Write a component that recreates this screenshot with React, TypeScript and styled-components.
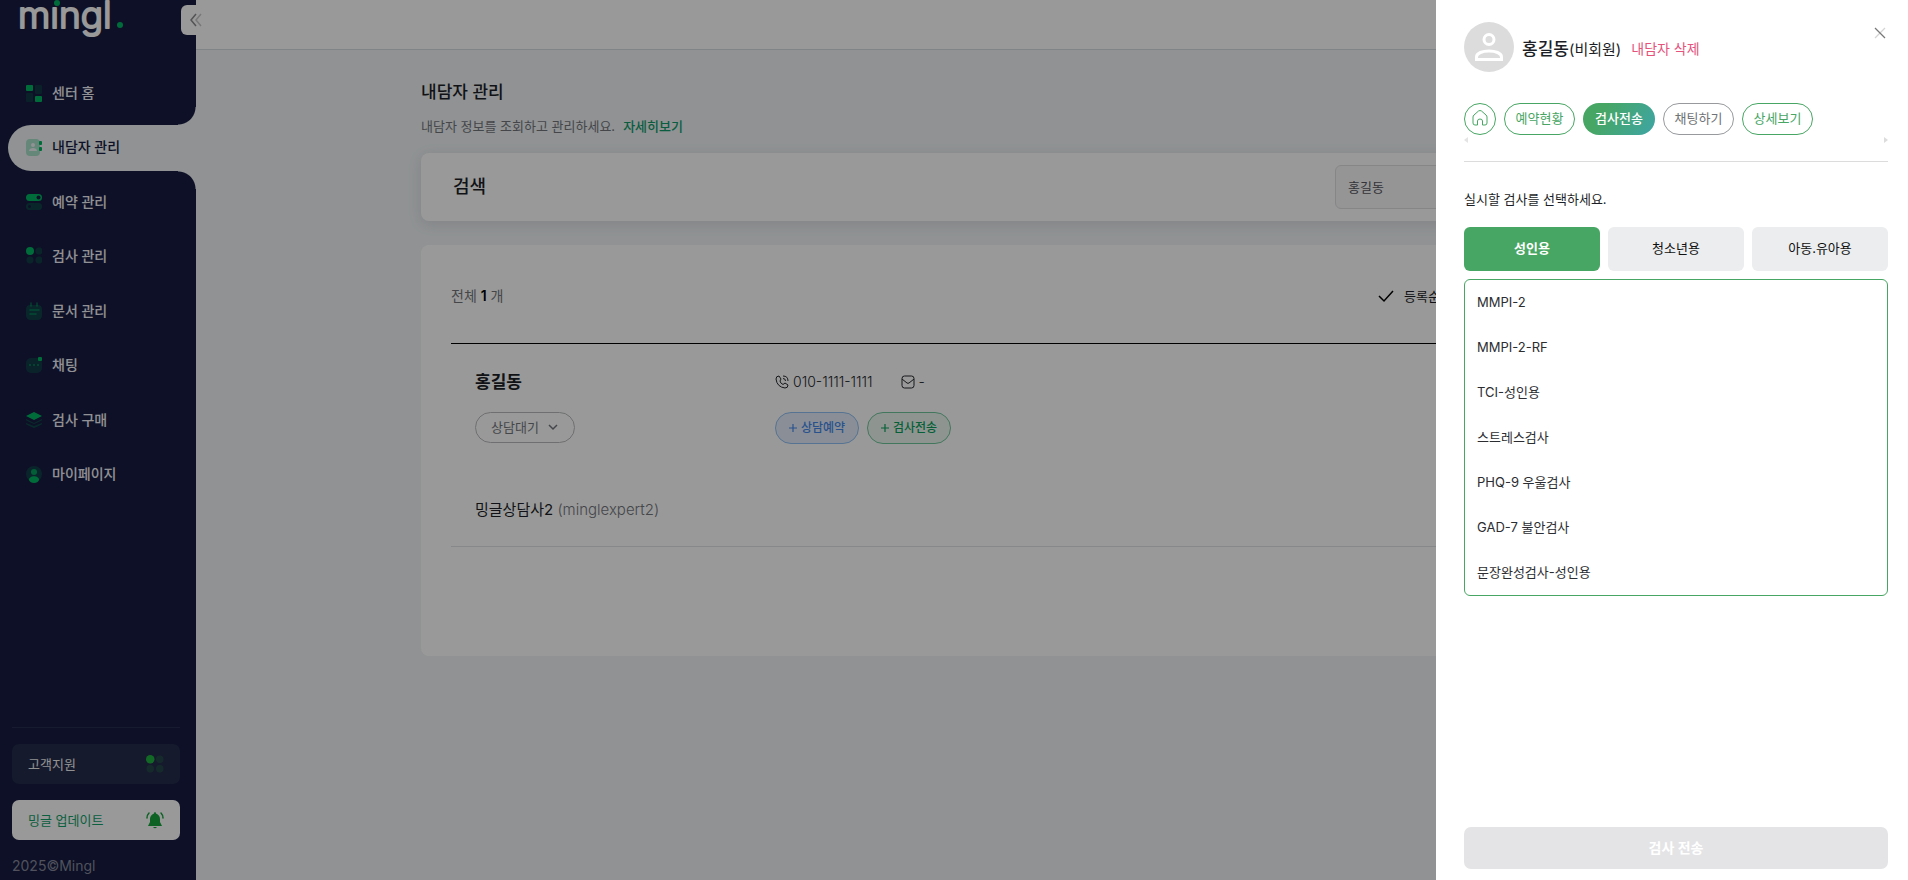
import React from "react";
import styled, { createGlobalStyle, css } from "styled-components";

const c = {
  navy: "#161c40",
  page: "#f0f4f6",
  green: "#00b562",
  leaf: "#47a663",
  ink: "#1d1f27",
  mute: "#73767c",
};

const GlobalStyle = createGlobalStyle`
  *, *::before, *::after { box-sizing: border-box; }
  body {
    margin: 0;
    font-family: Inter, "Noto Sans CJK KR", sans-serif;
    font-size: 13px;
    line-height: 20px;
    color: ${c.ink};
    background: ${c.page};
  }
  button, input, select { font: inherit; color: inherit; margin: 0; }
  button { cursor: pointer; }
  h1, h2, h3, p, ul { margin: 0; padding: 0; }
  ul { list-style: none; }
  a { text-decoration: none; color: inherit; }
  svg { display: block; flex: none; }
`;

const Shell = styled.div`
  display: flex;
  min-height: 100vh;
`;

/* Sidebar */
const Sidebar = styled.aside`
  position: relative;
  flex: none;
  display: flex;
  flex-direction: column;
  width: 196px;
  min-height: 100vh;
  background: ${c.navy};
`;

const LogoLink = styled.a`
  display: block;
  height: 70px;
  padding-left: 16px;
`;

const CollapseButton = styled.button`
  position: absolute;
  top: 5px;
  left: 181px;
  z-index: 1;
  display: flex;
  align-items: center;
  width: 34px;
  height: 30px;
  padding: 0 0 0 8px;
  border: 0;
  border-radius: 6px;
  background: #fff;
`;

const NavList = styled.ul`
  display: flex;
  flex-direction: column;
  justify-content: space-between;
  height: 428px;
  padding-left: 8px;
`;

const corner = css`
  content: "";
  position: absolute;
  right: 0;
  width: 18px;
  height: 18px;
  pointer-events: none;
`;

const NavLink = styled.a<{ $active?: boolean }>`
  position: relative;
  display: flex;
  align-items: center;
  gap: 10px;
  height: 46px;
  padding: 0 0 1px 18px;
  border-radius: 23px 0 0 23px;
  font-size: 14px;
  font-weight: 500;
  color: #f2f2f8;
  ${(p) =>
    p.$active &&
    css`
      background: ${c.page};
      color: ${c.navy};
      &::before {
        ${corner}
        bottom: 100%;
        background: radial-gradient(circle at 0 0, transparent 17px, ${c.page} 18px);
      }
      &::after {
        ${corner}
        top: 100%;
        background: radial-gradient(circle at 0 100%, transparent 17px, ${c.page} 18px);
      }
    `}
`;

const SidebarFoot = styled.div`
  display: flex;
  flex-direction: column;
  gap: 16px;
  margin-top: auto;
  padding: 0 16px 4px 12px;
`;

const FootRule = styled.hr`
  width: 100%;
  margin: 0;
  border: 0;
  border-top: 1px solid #262d50;
`;

const FootButton = styled.button<{ $light?: boolean }>`
  display: flex;
  align-items: center;
  justify-content: space-between;
  height: 40px;
  padding: 0 16px;
  border: 0;
  border-radius: 7px;
  background: ${(p) => (p.$light ? "#fff" : "#252c4c")};
  color: ${(p) => (p.$light ? "#12a06a" : "#f2f2f2")};
`;

const Copyright = styled.small`
  font-size: 14px;
  color: #85889b;
`;

/* Main column */
const Main = styled.main`
  flex: 1;
  min-width: 0;
`;

const TopBar = styled.header`
  height: 50px;
  background: #fff;
  border-bottom: 1px solid #d8dce0;
`;

const Content = styled.div`
  max-width: 1262px;
  margin: 0 auto;
  padding-top: 30px;
`;

const PageTitle = styled.h1`
  font-size: 17px;
  line-height: 24px;
  font-weight: 500;
`;

const Lead = styled.p`
  margin: 12px 0 17px;
  color: ${c.mute};
`;

const MoreLink = styled.a`
  margin-left: 8px;
  font-weight: 500;
  color: #119c6c;
`;

const SearchCard = styled.section`
  display: flex;
  align-items: center;
  justify-content: space-between;
  height: 68px;
  padding: 0 32px;
  border-radius: 8px;
  background: #fff;
  box-shadow: 0 3px 14px rgba(40, 40, 70, 0.12);
`;

const CardTitle = styled.h2`
  font-size: 18px;
  line-height: 24px;
  font-weight: 500;
`;

const SearchInput = styled.input`
  width: 316px;
  height: 44px;
  padding: 0 12px 2px;
  border: 1px solid #dfe0e2;
  border-radius: 6px;
  background: #f9f9fa;
  color: #55555f;
  outline: 0;
`;

const ListCard = styled.section`
  min-height: 411px;
  margin-top: 24px;
  padding: 0 30px;
  border-radius: 8px;
  background: #fff;
`;

const ListHead = styled.div`
  display: flex;
  align-items: center;
  justify-content: space-between;
  height: 99px;
  padding-top: 4px;
  border-bottom: 1px solid #000;
`;

const Total = styled.p`
  font-size: 14px;
  color: ${c.mute};
  strong { color: #000; font-weight: 600; }
`;

const SortButton = styled.button`
  display: flex;
  align-items: center;
  gap: 10px;
  width: 275px;
  padding: 0;
  border: 0;
  background: none;
`;

const ClientRow = styled.article`
  display: grid;
  grid-template-columns: 300px 1fr;
  row-gap: 16px;
  padding: 24px 24px 25px;
  border-bottom: 1px solid #e2e3e5;
`;

const ClientName = styled.h3`
  font-size: 17px;
  line-height: 28px;
  font-weight: 700;
`;

const ContactLine = styled.div`
  display: flex;
  align-items: center;
  gap: 28px;
`;

const Contact = styled.span`
  display: flex;
  align-items: center;
  gap: 4px;
  font-size: 14px;
  font-weight: 300;
  color: #25272c;
`;

const StatusBox = styled.div`
  position: relative;
  width: 100px;
  height: 32px;
  svg { position: absolute; right: 17px; top: 10px; pointer-events: none; }
`;

const StatusSelect = styled.select`
  appearance: none;
  width: 100%;
  height: 31px;
  padding: 0 15px 2px;
  border: 1px solid #b9babd;
  border-radius: 16px;
  background: #fff;
  color: ${c.mute};
`;

const ChipLine = styled.div`
  display: flex;
  gap: 8px;
`;

const Chip = styled.button<{ $tone: "blue" | "green" }>`
  display: flex;
  align-items: center;
  justify-content: center;
  gap: 4px;
  min-width: 84px;
  height: 32px;
  padding: 0 10px;
  border: 1px solid ${(p) => (p.$tone === "blue" ? "#8fc0f5" : "#6fc79b")};
  border-radius: 16px;
  background: ${(p) => (p.$tone === "blue" ? "#e6effc" : "#edf8f2")};
  color: ${(p) => (p.$tone === "blue" ? "#4588ea" : "#0aa05c")};
  font-size: 12px;
  font-weight: 500;
`;

const Counselor = styled.p`
  grid-column: 1 / -1;
  margin-top: 38px;
  font-size: 15px;
  line-height: 23px;
  span { color: ${c.mute}; font-weight: 300; }
`;

/* Drawer */
const Backdrop = styled.div`
  position: fixed;
  inset: 0;
  z-index: 2;
  background: rgba(0, 0, 0, 0.4);
`;

const Drawer = styled.section`
  position: fixed;
  top: 0;
  right: 0;
  bottom: 0;
  z-index: 3;
  display: flex;
  flex-direction: column;
  width: 472px;
  padding: 22px 20px 11px 28px;
  background: #fff;
`;

const DrawerHead = styled.header`
  display: flex;
  align-items: center;
  height: 50px;
`;

const DrawerName = styled.h2`
  margin: 4px 10px 0 8px;
  font-size: 17px;
  line-height: 24px;
  font-weight: 500;
  span { font-size: 15px; font-weight: 400; }
`;

const DeleteButton = styled.button`
  margin-top: 4px;
  padding: 0;
  border: 0;
  background: none;
  font-size: 14px;
  color: #e5527c;
`;

const CloseButton = styled.button`
  align-self: flex-start;
  margin-left: auto;
  padding: 5px 2px;
  border: 0;
  background: none;
`;

const PillBar = styled.nav`
  display: flex;
  gap: 8px;
  margin-top: 31px;
`;

const Pill = styled.button<{ $kind?: "solid" | "gray" | "round" }>`
  display: flex;
  align-items: center;
  justify-content: center;
  width: ${(p) => (p.$kind === "round" ? "32px" : p.$kind === "solid" ? "72px" : "71px")};
  height: 32px;
  padding: 0 0 2px;
  border: 1px solid ${c.leaf};
  border-radius: 16px;
  background: #fff;
  color: ${c.leaf};
  ${(p) =>
    p.$kind === "solid" &&
    css`
      border: 0;
      background: linear-gradient(120deg, ${c.leaf} 25%, #3ea5a5);
      color: #fff;
      font-weight: 500;
    `}
  ${(p) =>
    p.$kind === "gray" &&
    css`
      border-color: #97999c;
      color: #707275;
    `}
`;

const ScrollHints = styled.div`
  display: flex;
  justify-content: space-between;
  height: 27px;
  padding-top: 2px;
  border-bottom: 1px solid #dcdcdc;
`;

const Prompt = styled.p`
  margin: 27px 0 18px;
`;

const AgeTabs = styled.div`
  display: grid;
  grid-template-columns: repeat(3, 1fr);
  gap: 8px;
`;

const AgeTab = styled.button<{ $active?: boolean }>`
  height: 44px;
  padding: 0 0 3px;
  border: 0;
  border-radius: 6px;
  background: ${(p) => (p.$active ? c.leaf : "#ebedee")};
  color: ${(p) => (p.$active ? "#fff" : "#111")};
  font-weight: ${(p) => (p.$active ? 700 : 400)};
`;

const TestList = styled.ul`
  margin-top: 8px;
  border: 1px solid ${c.leaf};
  border-radius: 6px;
`;

const TestButton = styled.button`
  display: block;
  width: 100%;
  height: 45px;
  padding: 0 12px 2px;
  border: 0;
  background: none;
  text-align: left;
  color: #2b2d31;
`;

const SendButton = styled.button`
  height: 42px;
  margin-top: auto;
  border: 0;
  border-radius: 7px;
  background: #e4e4e6;
  color: #fff;
  font-size: 14px;
  font-weight: 700;
  cursor: default;
`;

/* Drawings */
const Logo = () => (
  <svg width="112" height="46" viewBox="0 0 112 46" overflow="visible" role="img" aria-label="mingl.">
    <text
      x="2"
      y="28"
      fontFamily="Inter, sans-serif"
      fontSize="37"
      fontWeight="300"
      fill="#fff"
      stroke="#fff"
      strokeWidth="2"
      strokeLinejoin="round"
    >
      mıngl
    </text>
    <circle cx="41" cy="3" r="3" fill={c.green} />
    <circle cx="104" cy="25" r="3" fill={c.green} />
  </svg>
);

const Icon = ({ children }: { children: React.ReactNode }) => (
  <svg width="16" height="18" viewBox="0 0 16 18" fill={c.green} aria-hidden="true">
    {children}
  </svg>
);

const Dots = () => (
  <>
    <circle cx="4" cy="4" r="4" />
    <g opacity=".22">
      <circle cx="13" cy="4" r="3.5" />
      <circle cx="4" cy="13" r="3.5" />
      <circle cx="13" cy="13" r="3.5" />
    </g>
  </>
);

const icons: Record<string, React.ReactNode> = {
  home: (
    <>
      <rect y="1" width="7" height="6" rx="1" />
      <rect x="9" y="12" width="7" height="6" rx="1" />
      <g opacity=".18">
        <rect x="9" y="1" width="7" height="9" rx="1" />
        <rect y="9" width="7" height="9" rx="1" />
      </g>
    </>
  ),
  client: (
    <>
      <rect y="1" width="14" height="17" rx="4" opacity=".3" />
      <circle cx="7" cy="7" r="2" fill="#f0f4f6" />
      <path d="M3 13c0-4 8-4 8 0z" fill="#f0f4f6" />
      <rect x="13" y="3" width="3" height="4" rx="1" />
      <rect x="13" y="9" width="3" height="4" rx="1" />
    </>
  ),
  booking: (
    <>
      <rect y="1" width="16" height="7" rx="3.5" />
      <circle cx="12.5" cy="4.5" r="2" fill={c.navy} />
      <rect y="10" width="16" height="7" rx="3.5" opacity=".25" />
      <circle cx="3.5" cy="13.5" r="1.5" fill={c.navy} />
    </>
  ),
  test: <Dots />,
  document: (
    <>
      <path d="M4 3h8q4 0 4 5v5q0 5-5 5H5q-5 0-5-5V8q0-5 4-5z" opacity=".25" />
      <path d="M5 1v3M11 1v3M4 8h9M4 12h6" stroke={c.green} strokeWidth="1.5" strokeLinecap="round" opacity=".5" />
    </>
  ),
  chat: (
    <>
      <rect y="2" width="16" height="15" rx="5" opacity=".2" />
      <rect x="12" y="1" width="4" height="4" rx="1" />
      <g opacity=".6">
        <circle cx="4" cy="9" r="1" />
        <circle cx="8" cy="9" r="1" />
        <circle cx="12" cy="9" r="1" />
      </g>
    </>
  ),
  shop: (
    <>
      <path d="M8 1l8 4-8 4-8-4z" />
      <path d="M0 8l8 4 8-4v1q-1 1-8 4Q1 10 0 9zM0 12l8 3 8-3v1q-1 1-8 4-7-3-8-4z" opacity=".28" />
    </>
  ),
  my: (
    <>
      <circle cx="8" cy="9" r="8" opacity=".22" />
      <circle cx="8" cy="7" r="3" opacity=".8" />
      <path d="M3 15c0-5 10-5 10 0-1 4-9 4-10 0z" />
    </>
  ),
};

const navItems = [
  ["home", "센터 홈"],
  ["client", "내담자 관리"],
  ["booking", "예약 관리"],
  ["test", "검사 관리"],
  ["document", "문서 관리"],
  ["chat", "채팅"],
  ["shop", "검사 구매"],
  ["my", "마이페이지"],
];

const tests = [
  "MMPI-2",
  "MMPI-2-RF",
  "TCI-성인용",
  "스트레스검사",
  "PHQ-9 우울검사",
  "GAD-7 불안검사",
  "문장완성검사-성인용",
];

const Plus = () => (
  <svg width="8" height="8" viewBox="0 0 8 8" stroke="currentColor" strokeWidth="1.2" aria-hidden="true">
    <path d="M4 0v8M0 4h8" />
  </svg>
);

export default function App() {
  return (
    <>
      <GlobalStyle />
      <Shell>
        <Sidebar>
          <LogoLink href="#">
            <Logo />
          </LogoLink>
          <CollapseButton aria-label="메뉴 접기">
            <svg width="14" height="14" viewBox="0 0 14 14" fill="none" strokeWidth="1.5">
              <path d="M7 1L2 7l5 6" stroke="#8b8b90" />
              <path d="M12 1L7 7l5 6" stroke="#c8c8cc" />
            </svg>
          </CollapseButton>
          <nav>
            <NavList>
              {navItems.map(([key, label]) => (
                <li key={key}>
                  <NavLink href="#" $active={key === "client"}>
                    <Icon>{icons[key]}</Icon>
                    {label}
                  </NavLink>
                </li>
              ))}
            </NavList>
          </nav>
          <SidebarFoot>
            <FootRule />
            <FootButton>
              고객지원
              <svg width="18" height="18" viewBox="0 0 17 17" fill="#1fb03f" aria-hidden="true">
                <Dots />
              </svg>
            </FootButton>
            <FootButton $light>
              밍글 업데이트
              <svg width="18" height="18" viewBox="0 0 18 18" fill="#17a33c" aria-hidden="true">
                <path d="M9 1q1 0 1 1.5Q14 4 14 8v3l2 4H2l2-4V8q0-4 4-5.5Q8 1 9 1zM7 16h4q-2 2.500-4 0z" />
                <path d="M3 2Q1 4 1 7M15 2q2 2 2 5" fill="none" stroke="#17a33c" strokeWidth="1.5" strokeLinecap="round" />
              </svg>
            </FootButton>
            <Copyright>2025©Mingl</Copyright>
          </SidebarFoot>
        </Sidebar>

        <Main>
          <TopBar />
          <Content>
            <PageTitle>내담자 관리</PageTitle>
            <Lead>
              내담자 정보를 조회하고 관리하세요.
              <MoreLink href="#">자세히보기</MoreLink>
            </Lead>
            <SearchCard>
              <CardTitle>검색</CardTitle>
              <SearchInput type="text" aria-label="검색" defaultValue="홍길동" />
            </SearchCard>
            <ListCard>
              <ListHead>
                <Total>
                  전체 <strong>1</strong> 개
                </Total>
                <SortButton>
                  <svg width="16" height="16" viewBox="0 0 16 16" fill="none" stroke="#000" strokeWidth="1.5" aria-hidden="true">
                    <path d="M1 8l5 5 9-10" />
                  </svg>
                  등록순
                </SortButton>
              </ListHead>
              <ClientRow>
                <ClientName>홍길동</ClientName>
                <ContactLine>
                  <Contact>
                    <svg width="14" height="14" viewBox="0 0 14 14" fill="none" stroke="currentColor" aria-hidden="true">
                      <path d="M4 1Q1 1 1 4q1 8 9 9 3 0 3-3l-3-2-2 1.5Q5 8 5 6l1-2zM8 1q5 0 5 5M8 3.5q2.5 0 2.5 2.5" />
                    </svg>
                    010-1111-1111
                  </Contact>
                  <Contact>
                    <svg width="14" height="14" viewBox="0 0 14 14" fill="none" stroke="currentColor" aria-hidden="true">
                      <rect x="1" y="1" width="12" height="12" rx="2.5" />
                      <path d="M1 4l5 4q1 .6 2 0l5-4" />
                    </svg>
                    -
                  </Contact>
                </ContactLine>
                <StatusBox>
                  <StatusSelect aria-label="상담 상태" defaultValue="wait">
                    <option value="wait">상담대기</option>
                  </StatusSelect>
                  <svg width="10" height="10" viewBox="0 0 10 10" fill="none" stroke="#73767c" strokeWidth="1.5">
                    <path d="M1 3l4 4 4-4" />
                  </svg>
                </StatusBox>
                <ChipLine>
                  <Chip $tone="blue">
                    <Plus />
                    상담예약
                  </Chip>
                  <Chip $tone="green">
                    <Plus />
                    검사전송
                  </Chip>
                </ChipLine>
                <Counselor>
                  밍글상담사2 <span>(minglexpert2)</span>
                </Counselor>
              </ClientRow>
            </ListCard>
          </Content>
        </Main>
      </Shell>

      <Backdrop />
      <Drawer role="dialog" aria-label="홍길동">
        <DrawerHead>
          <svg width="50" height="50" viewBox="0 0 50 50" fill="none" stroke="#fff" strokeWidth="3" aria-hidden="true">
            <circle cx="25" cy="25" r="25" fill="#dcdcdc" stroke="none" />
            <circle cx="25" cy="17.5" r="5" />
            <path d="M12.5 37.5v-2.5c0-8 25-8 25 0v2.5z" />
          </svg>
          <DrawerName>
            홍길동<span>(비회원)</span>
          </DrawerName>
          <DeleteButton>내담자 삭제</DeleteButton>
          <CloseButton aria-label="닫기">
            <svg width="12" height="12" viewBox="0 0 12 12" strokeWidth="1.2">
              <path d="M11 1L1 11" stroke="#d4d4d4" />
              <path d="M1 1l10 10" stroke="#777" />
            </svg>
          </CloseButton>
        </DrawerHead>
        <PillBar>
          <Pill $kind="round" aria-label="홈">
            <svg width="16" height="16" viewBox="0 0 16 16" fill="none" stroke="currentColor">
              <path
                d="M1 7q0-1 1-2l4.5-4q1.5-1 3 0L14 5q1 1 1 2v6q0 2-2 2h-2.5v-4q0-2-2.5-2t-2.5 2v4H3q-2 0-2-2z"
                strokeLinejoin="round"
              />
            </svg>
          </Pill>
          <Pill>예약현황</Pill>
          <Pill $kind="solid">검사전송</Pill>
          <Pill $kind="gray">채팅하기</Pill>
          <Pill>상세보기</Pill>
        </PillBar>
        <ScrollHints aria-hidden="true">
          <svg width="4" height="6" viewBox="0 0 4 6" fill="#e4e4e4">
            <path d="M4 0v6L0 3z" />
          </svg>
          <svg width="4" height="6" viewBox="0 0 4 6" fill="#dcdcdc">
            <path d="M0 0v6l4-3z" />
          </svg>
        </ScrollHints>
        <Prompt>실시할 검사를 선택하세요.</Prompt>
        <AgeTabs>
          <AgeTab $active>성인용</AgeTab>
          <AgeTab>청소년용</AgeTab>
          <AgeTab>아동.유아용</AgeTab>
        </AgeTabs>
        <TestList>
          {tests.map((name) => (
            <li key={name}>
              <TestButton>{name}</TestButton>
            </li>
          ))}
        </TestList>
        <SendButton disabled>검사 전송</SendButton>
      </Drawer>
    </>
  );
}
